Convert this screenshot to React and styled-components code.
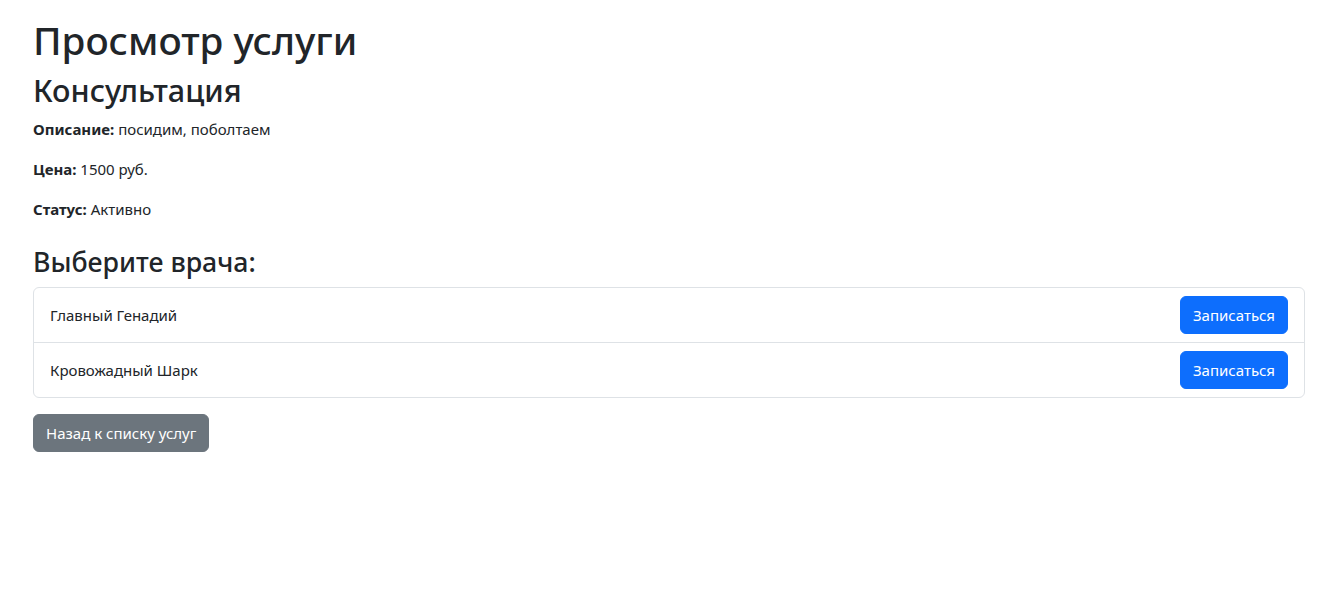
import React from 'react';
import styled, { createGlobalStyle } from 'styled-components';

const GlobalStyle = createGlobalStyle`
  *, *::before, *::after { box-sizing: border-box; }
  body {
    margin: 0;
    font-family: "Noto Sans", "Open Sans", sans-serif;
    font-size: 16px;
    line-height: 1.5;
    color: #212529;
    background: #fff;
  }
`;

const Page = styled.div`
  padding: 16px 35px 0 33px;
`;

const Title = styled.h1`
  margin: 0 0 8px;
  font-size: 38.6px;
  font-weight: 500;
  line-height: 48px;
`;

const ServiceName = styled.h2`
  margin: 0 0 8px;
  font-size: 30.6px;
  font-weight: 500;
  line-height: 37.4px;
`;

const Field = styled.p`
  margin: 0 0 16px;
  font-size: 15px;
  line-height: 24px;

  b { font-weight: 700; }
`;

const Section = styled.h3`
  margin: 24px 0 8px;
  font-size: 26.7px;
  font-weight: 500;
  line-height: 33.6px;
`;

const List = styled.ul`
  list-style: none;
  margin: 0;
  padding: 0;
  border: 1px solid #dee2e6;
  border-radius: 6px;
`;

const Item = styled.li`
  display: flex;
  justify-content: space-between;
  align-items: center;
  padding: 8px 16px;
  font-size: 15px;
  & + & { border-top: 1px solid #dee2e6; }
`;

const Button = styled.button`
  font-family: inherit;
  font-size: 15px;
  line-height: 24px;
  padding: 6px 12px;
  border: 1px solid ${(p) => p.$bg};
  border-radius: 6px;
  background: ${(p) => p.$bg};
  color: #fff;
  cursor: pointer;
`;

const BackButton = styled(Button)`
  margin-top: 16px;
`;

const doctors = ['Главный Генадий', 'Кровожадный Шарк'];

export default function App() {
  return (
    <>
      <GlobalStyle />
      <Page>
        <Title>Просмотр услуги</Title>
        <ServiceName>Консультация</ServiceName>
        <Field><b>Описание:</b> посидим, поболтаем</Field>
        <Field><b>Цена:</b> 1500 руб.</Field>
        <Field><b>Статус:</b> Активно</Field>
        <Section>Выберите врача:</Section>
        <List>
          {doctors.map((d) => (
            <Item key={d}>
              <span>{d}</span>
              <Button $bg="#0d6efd">Записаться</Button>
            </Item>
          ))}
        </List>
        <BackButton $bg="#6c757d">Назад к списку услуг</BackButton>
      </Page>
    </>
  );
}
